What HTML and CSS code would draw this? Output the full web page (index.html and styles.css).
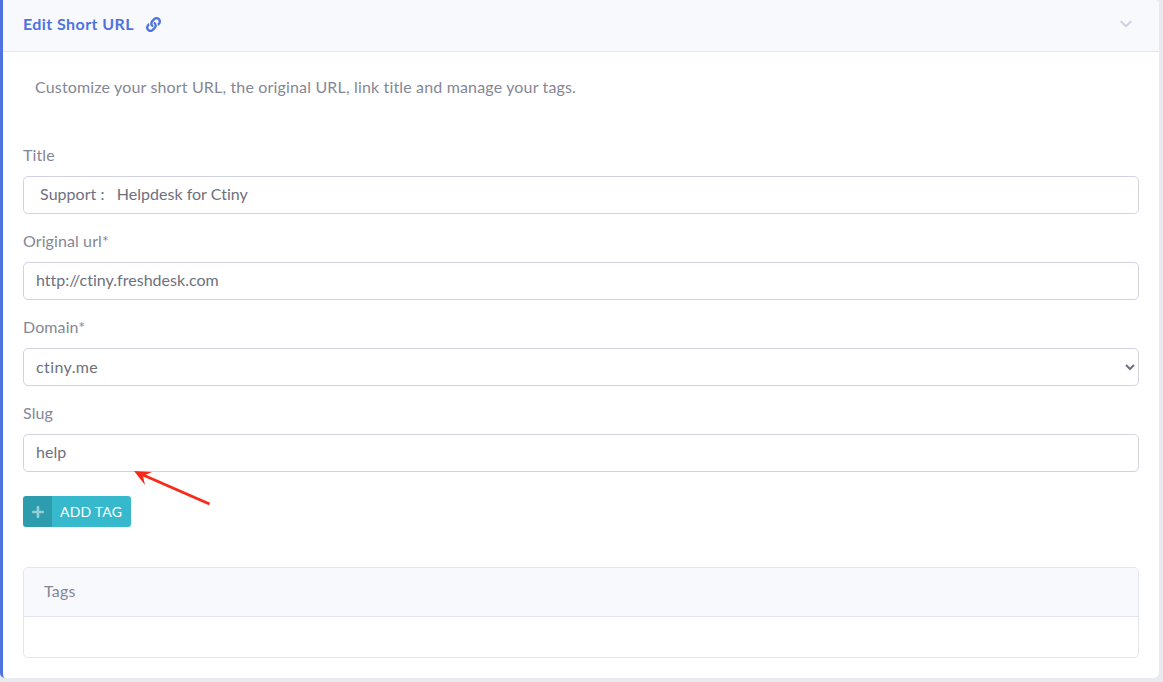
FILE: index.html
```html
<!DOCTYPE html>
<html lang="en">
<head>
<meta charset="utf-8">
<title>Edit Short URL</title>
<link rel="stylesheet" href="styles.css">
</head>
<body>
<main class="card">
  <header class="card-header">
    <h1 class="card-title">Edit Short URL
      <svg class="link-icon" viewBox="0 0 512 512"><path d="M326.612 185.391c59.747 59.809 58.927 155.698.36 214.59-.11.12-.24.25-.36.37l-67.2 67.2c-59.27 59.27-155.699 59.262-214.96 0-59.27-59.26-59.27-155.7 0-214.96l37.106-37.106c9.84-9.84 26.786-3.3 27.294 10.606.648 17.722 3.826 35.527 9.69 52.721 1.986 5.822.567 12.262-3.783 16.612l-13.087 13.087c-28.026 28.026-28.905 73.66-1.155 101.96 28.024 28.579 74.086 28.749 102.325.51l67.2-67.19c28.191-28.191 28.073-73.757 0-101.83-3.701-3.694-7.429-6.564-10.341-8.569a16.037 16.037 0 0 1-6.947-12.606c-.396-10.567 3.348-21.456 11.698-29.806l21.054-21.055c5.521-5.521 14.182-6.199 20.584-1.731a152.482 152.482 0 0 1 20.522 17.197zM467.547 44.449c-59.261-59.262-155.69-59.27-214.96 0l-67.2 67.2c-.12.12-.25.25-.36.37-58.566 58.892-59.387 154.781.36 214.59a152.454 152.454 0 0 0 20.521 17.196c6.402 4.468 15.064 3.789 20.584-1.731l21.054-21.055c8.35-8.35 12.094-19.239 11.698-29.806a16.037 16.037 0 0 0-6.947-12.606c-2.912-2.005-6.64-4.875-10.341-8.569-28.073-28.073-28.191-73.639 0-101.83l67.2-67.19c28.239-28.239 74.3-28.069 102.325.51 27.75 28.3 26.872 73.934-1.155 101.96l-13.087 13.087c-4.35 4.35-5.769 10.79-3.783 16.612 5.864 17.194 9.042 34.999 9.69 52.721.509 13.906 17.454 20.446 27.294 10.606l37.106-37.106c59.271-59.259 59.271-155.699.001-214.959z"/></svg>
    </h1>
    <svg class="chevron" viewBox="0 0 448 512"><path d="M207.029 381.476L12.686 187.132c-9.373-9.373-9.373-24.569 0-33.941l22.667-22.667c9.357-9.357 24.522-9.375 33.901-.04L224 284.505l154.745-154.021c9.379-9.335 24.544-9.317 33.901.04l22.667 22.667c9.373 9.373 9.373 24.569 0 33.941L240.971 381.476c-9.373 9.372-24.569 9.372-33.942 0z"/></svg>
  </header>
  <div class="card-body">
    <p class="intro">Customize your short URL, the original URL, link title and manage your tags.</p>
    <form class="form">
      <div class="group">
        <label class="label" for="title">Title</label>
        <input class="control" id="title" type="text" value=" Support :   Helpdesk for Ctiny">
      </div>
      <div class="group">
        <label class="label" for="url">Original url*</label>
        <input class="control" id="url" type="text" value="http://ctiny.freshdesk.com">
      </div>
      <div class="group">
        <label class="label" for="domain">Domain*</label>
        <select class="control select" id="domain"><option>ctiny.me</option></select>
      </div>
      <div class="group">
        <label class="label" for="slug">Slug</label>
        <input class="control" id="slug" type="text" value="help">
      </div>
      <svg class="arrow" viewBox="0 0 80 40"><path d="M77.5 35L10 5.5"/><polygon points="2,2 20,3 11,7 13,16"/></svg>
      <button class="btn" type="button">
        <span class="btn-icon"><svg viewBox="0 0 448 512"><path d="M416 208H272V64c0-17.67-14.33-32-32-32h-32c-17.67 0-32 14.33-32 32v144H32c-17.67 0-32 14.33-32 32v32c0 17.67 14.33 32 32 32h144v144c0 17.67 14.33 32 32 32h32c17.67 0 32-14.33 32-32V304h144c17.67 0 32-14.33 32-32v-32c0-17.67-14.33-32-32-32z"/></svg></span>
        <span class="btn-text">ADD TAG</span>
      </button>
    </form>
    <section class="tags">
      <h2 class="tags-header">Tags</h2>
      <div class="tags-body"></div>
    </section>
  </div>
</main>
</body>
</html>
```
FILE: styles.css
```css
* { box-sizing: border-box; }
html, body { margin: 0; height: 100%; }
body {
  background: #e9eaf0;
  font-family: "Lato", "Noto Sans", sans-serif;
  font-size: 16px;
  line-height: 24px;
  color: #858796;
  overflow: hidden;
}
.card {
  width: 1159px;
  height: 678px;
  background: #fff;
  border-left: 3px solid #4e73df;
  border-radius: 0 5px 5px 5px;
  overflow: hidden;
}
.card-header {
  height: 52px;
  display: flex;
  align-items: center;
  justify-content: space-between;
  padding: 0 27px 3px 20px;
  background: #f8f9fc;
  border-bottom: 1px solid #e3e6f0;
}
.card-title {
  margin: 0;
  display: flex;
  align-items: center;
  gap: 12px;
  font-size: 16px;
  font-weight: 700;
  letter-spacing: .42px;
  color: #4e73df;
}
.link-icon { width: 15px; height: 15px; fill: #4e73df; }
.chevron { width: 12px; height: 14px; fill: #d1d3e2; }
.card-body { padding: 23px 20px 20px; }
.intro { margin: 0 0 45px; padding: 0 12px; letter-spacing: .16px; }
.form { position: relative; display: flex; flex-direction: column; }
.group { display: flex; flex-direction: column; margin-bottom: 16px; }
.label { height: 24px; margin-bottom: 8px; line-height: 22px; letter-spacing: .1px; }
.control {
  height: 38px;
  padding: 4px 12px 8px;
  font: inherit;
  letter-spacing: .02px;
  color: #6e707e;
  background: #fff;
  border: 1px solid #d1d3e2;
  border-radius: 5px;
  outline: none;
}
.select { padding: 5px 12px 7px 8px; letter-spacing: .4px; }
.arrow {
  position: absolute;
  left: 109px;
  top: 325px;
  width: 80px;
  height: 40px;
}
.arrow path { fill: none; stroke: #fa2a1a; stroke-width: 3; }
.arrow polygon { fill: #fa2a1a; }
.btn {
  align-self: flex-start;
  display: flex;
  align-items: stretch;
  height: 31px;
  margin: 8px 0 40px;
  padding: 0;
  font: inherit;
  font-size: 14px;
  line-height: 21px;
  color: #fff;
  background: #36b9cc;
  border: 0;
  border-radius: 3px;
  overflow: hidden;
}
.btn-icon {
  display: flex;
  align-items: center;
  justify-content: center;
  width: 29px;
  background: rgba(0, 0, 0, .15);
}
.btn-icon svg { width: 12px; height: 14px; fill: rgba(255, 255, 255, .5); }
.btn-text { display: flex; align-items: center; padding: 0 9px 0 8px; letter-spacing: .2px; }
.tags {
  height: 91px;
  border: 1px solid #e3e6f0;
  border-radius: 5px;
  overflow: hidden;
}
.tags-header {
  margin: 0;
  height: 49px;
  padding: 11px 20px 13px;
  font-size: 16px;
  font-weight: 400;
  letter-spacing: .2px;
  background: #f8f9fc;
  border-bottom: 1px solid #e3e6f0;
}
```
